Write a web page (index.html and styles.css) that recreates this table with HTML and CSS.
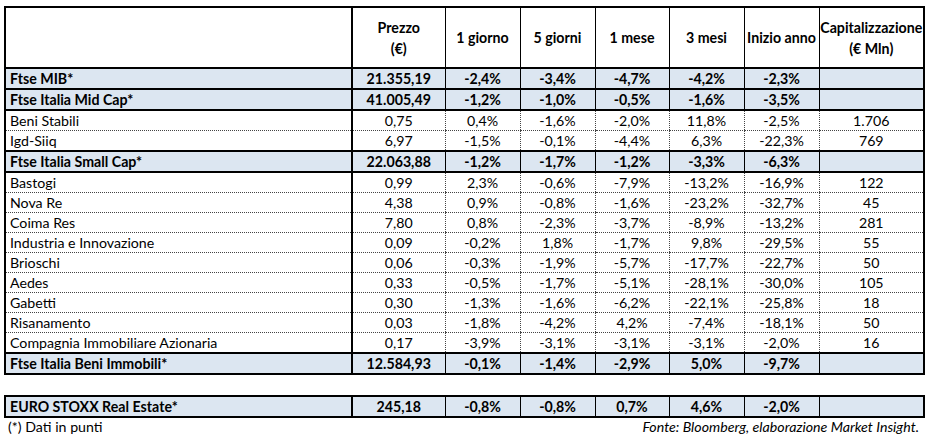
FILE: index.html
```html
<!DOCTYPE html>
<html lang="it">
<head>
<meta charset="utf-8">
<title>Titoli immobiliari</title>
<link rel="stylesheet" href="styles.css">
</head>
<body>
<div class="page">
  <table class="grid main">
    <colgroup>
      <col class="c-name"><col class="c-price"><col class="c-p"><col class="c-p"><col class="c-p4"><col class="c-p"><col class="c-p"><col class="c-cap">
    </colgroup>
    <thead>
      <tr class="head">
        <th></th>
        <th>Prezzo<br>(€)</th>
        <th>1 giorno</th>
        <th>5 giorni</th>
        <th>1 mese</th>
        <th>3 mesi</th>
        <th>Inizio anno</th>
        <th>Capitalizzazione<br>(€ Mln)</th>
      </tr>
    </thead>
    <tbody>
      <tr class="idx"><td>Ftse MIB*</td><td>21.355,19</td><td>-2,4%</td><td>-3,4%</td><td>-4,7%</td><td>-4,2%</td><td>-2,3%</td><td></td></tr>
      <tr class="idx"><td>Ftse Italia Mid Cap*</td><td>41.005,49</td><td>-1,2%</td><td>-1,0%</td><td>-0,5%</td><td>-1,6%</td><td>-3,5%</td><td></td></tr>
      <tr class="stk"><td>Beni Stabili</td><td>0,75</td><td>0,4%</td><td>-1,6%</td><td>-2,0%</td><td>11,8%</td><td>-2,5%</td><td>1.706</td></tr>
      <tr class="stk"><td>Igd-Siiq</td><td>6,97</td><td>-1,5%</td><td>-0,1%</td><td>-4,4%</td><td>6,3%</td><td>-22,3%</td><td>769</td></tr>
      <tr class="idx"><td>Ftse Italia Small Cap*</td><td>22.063,88</td><td>-1,2%</td><td>-1,7%</td><td>-1,2%</td><td>-3,3%</td><td>-6,3%</td><td></td></tr>
      <tr class="stk"><td>Bastogi</td><td>0,99</td><td>2,3%</td><td>-0,6%</td><td>-7,9%</td><td>-13,2%</td><td>-16,9%</td><td>122</td></tr>
      <tr class="stk"><td>Nova Re</td><td>4,38</td><td>0,9%</td><td>-0,8%</td><td>-1,6%</td><td>-23,2%</td><td>-32,7%</td><td>45</td></tr>
      <tr class="stk"><td>Coima Res</td><td>7,80</td><td>0,8%</td><td>-2,3%</td><td>-3,7%</td><td>-8,9%</td><td>-13,2%</td><td>281</td></tr>
      <tr class="stk"><td>Industria e Innovazione</td><td>0,09</td><td>-0,2%</td><td>1,8%</td><td>-1,7%</td><td>9,8%</td><td>-29,5%</td><td>55</td></tr>
      <tr class="stk"><td>Brioschi</td><td>0,06</td><td>-0,3%</td><td>-1,9%</td><td>-5,7%</td><td>-17,7%</td><td>-22,7%</td><td>50</td></tr>
      <tr class="stk"><td>Aedes</td><td>0,33</td><td>-0,5%</td><td>-1,7%</td><td>-5,1%</td><td>-28,1%</td><td>-30,0%</td><td>105</td></tr>
      <tr class="stk"><td>Gabetti</td><td>0,30</td><td>-1,3%</td><td>-1,6%</td><td>-6,2%</td><td>-22,1%</td><td>-25,8%</td><td>18</td></tr>
      <tr class="stk"><td>Risanamento</td><td>0,03</td><td>-1,8%</td><td>-4,2%</td><td>4,2%</td><td>-7,4%</td><td>-18,1%</td><td>50</td></tr>
      <tr class="stk"><td>Compagnia Immobiliare Azionaria</td><td>0,17</td><td>-3,9%</td><td>-3,1%</td><td>-3,1%</td><td>-3,1%</td><td>-2,0%</td><td>16</td></tr>
      <tr class="idx"><td>Ftse Italia Beni Immobili*</td><td>12.584,93</td><td>-0,1%</td><td>-1,4%</td><td>-2,9%</td><td>5,0%</td><td>-9,7%</td><td></td></tr>
    </tbody>
  </table>

  <table class="grid euro">
    <colgroup>
      <col class="c-name"><col class="c-price"><col class="c-p"><col class="c-p"><col class="c-p4"><col class="c-p"><col class="c-p"><col class="c-cap">
    </colgroup>
    <tbody>
      <tr class="idx"><td>EURO STOXX Real Estate*</td><td>245,18</td><td>-0,8%</td><td>-0,8%</td><td>0,7%</td><td>4,6%</td><td>-2,0%</td><td></td></tr>
    </tbody>
  </table>

  <div class="notes">
    <span class="note">(*) Dati in punti</span>
    <span class="source">Fonte: Bloomberg, elaborazione Market Insight.</span>
  </div>
</div>
</body>
</html>
```

FILE: styles.css
```css
html, body {
  margin: 0;
  padding: 0;
  background: #ffffff;
}

.page {
  padding: 6px 4px 0 4px;
  width: 921px;
  font-family: Lato, "Liberation Sans", sans-serif;
  font-size: 14.2px;
  color: #000;
}

.grid {
  border-collapse: collapse;
  table-layout: fixed;
  width: 921px;
  border: 2px solid #000;
}

.c-name { width: 347px; }
.c-price { width: 93px; }
.c-p { width: 75px; }
.c-p4 { width: 74px; }
.c-cap { width: 105px; }

.grid th,
.grid td {
  padding: 0;
  text-align: center;
  vertical-align: middle;
  white-space: nowrap;
  overflow: visible;
  line-height: 17px;
}

.grid td:first-child {
  text-align: left;
  padding-left: 4px;
  border-right: 2px solid #000;
}

.head th {
  height: 59px;
  font-weight: bold;
  line-height: 21px;
  border-left: 1px solid #000;
  border-bottom: 2px solid #000;
}

.head th:first-child {
  border-right: 2px solid #000;
}

.idx td {
  height: 19px;
  font-weight: bold;
  background: #dce6f1;
  border-top: 2px solid #000;
  border-bottom: 2px solid #000;
  border-left: 1px solid #000;
}

.stk td {
  height: 19px;
  border-top: 1px dotted #444;
  border-bottom: 1px dotted #444;
  border-left: 1px dotted #444;
}

.grid td:first-child {
  border-right: 2px solid #000;
}

.euro {
  margin-top: 20px;
}

.notes {
  display: flex;
  justify-content: space-between;
  padding: 0 6px 0 4px;
  line-height: 18px;
}

.source {
  font-style: italic;
}
```
